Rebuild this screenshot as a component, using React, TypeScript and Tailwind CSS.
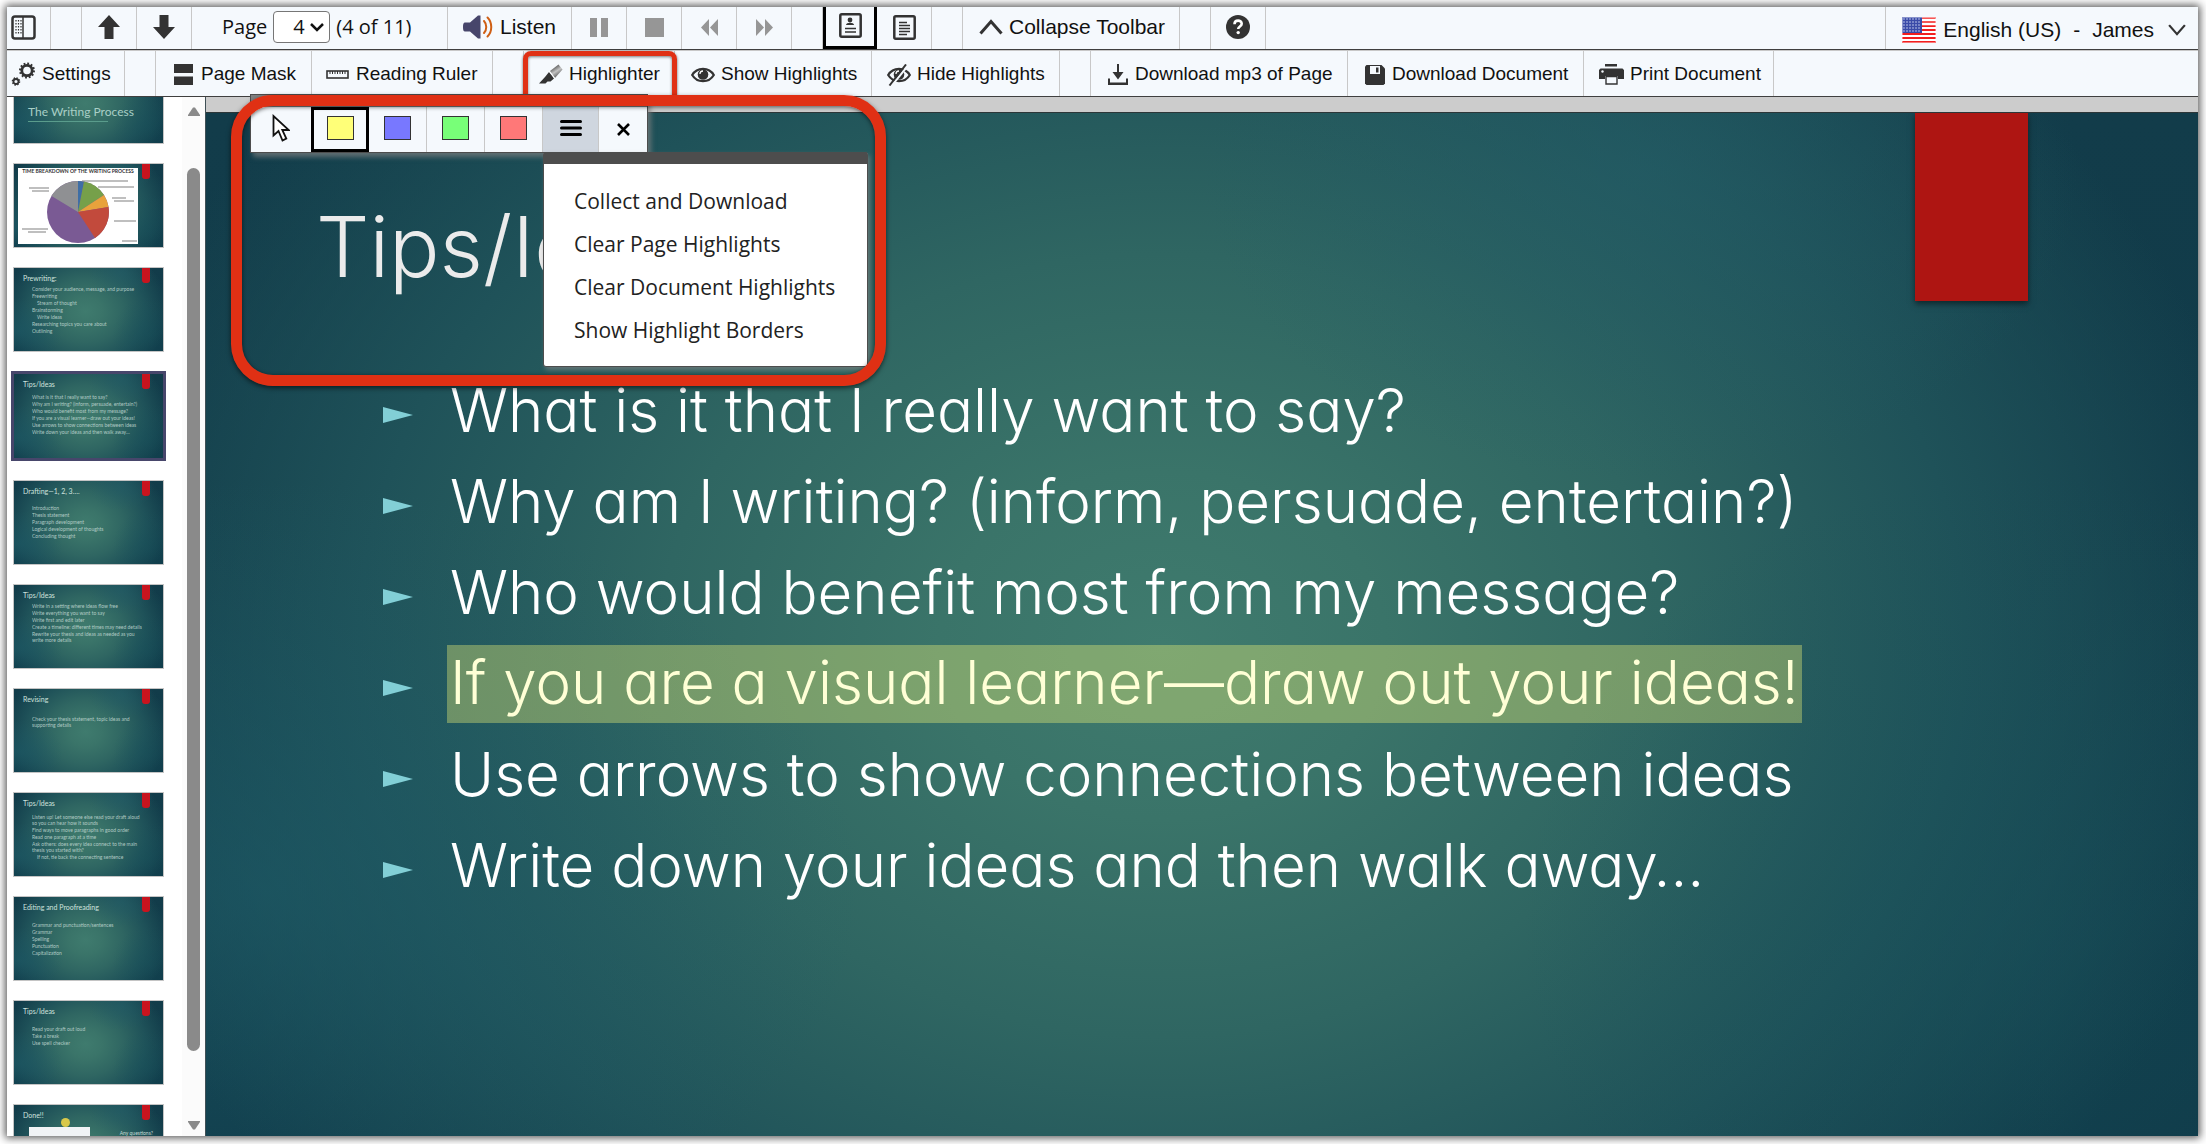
import type { ReactNode } from 'react';

const ink = '#333333';

function ArrowIcon({ down = false }: { down?: boolean }) {
  return (
    <svg width="22" height="24" viewBox="0 0 22 24" fill={ink}>
      <path d={down ? 'M6.500 0h9v12H22L11 24 0 12h6.500z' : 'M6.500 24h9V12H22L11 0 0 12h6.500z'} />
    </svg>
  );
}

function PanelIcon() {
  return (
    <svg width="25" height="25" viewBox="0 0 25 25" fill="none" stroke={ink}>
      <rect x="1.500" y="1.500" width="22" height="22" rx="2.500" strokeWidth="2.500" />
      <path d="M12 2v21" strokeWidth="1.500" />
      <path d="M5 5v14M7.500 5v14M10 5v14" strokeWidth="1.200" strokeDasharray="1.500 1.500" />
    </svg>
  );
}

function SpeakerIcon() {
  return (
    <svg width="30" height="24" viewBox="0 0 30 24" fill="none">
      <path d="M2 7.500h5L15 0.500h2.500v23H15L7 16.500H2C0.500 16.500 0 15 0 12s0.500-4.500 2-4.500z" fill="#47466b" />
      <path d="M21 6c3 3.200 3 8.800 0 12" stroke="#cf5f14" strokeWidth="2" strokeLinecap="round" />
      <path d="M24.500 2.500c5 5 5 14 0 19" stroke="#cf5f14" strokeWidth="2" strokeLinecap="round" />
    </svg>
  );
}

function PortraitPageIcon() {
  return (
    <svg width="23" height="25" viewBox="0 0 23 25" fill="none" stroke={ink}>
      <rect x="1.300" y="1.300" width="20.400" height="22.400" rx="1.500" strokeWidth="2.500" />
      <circle cx="11" cy="7" r="2.400" fill={ink} stroke="none" />
      <path d="M7 12c0-3 8-3 8 0z" fill={ink} stroke="none" />
      <path d="M6 15.500h11M6 19h11" strokeWidth="1.600" />
    </svg>
  );
}

function TextPageIcon() {
  return (
    <svg width="23" height="25" viewBox="0 0 23 25" fill="none" stroke={ink}>
      <rect x="1.300" y="1.300" width="20.400" height="22.400" rx="1.500" strokeWidth="2.500" />
      <path d="M6 7.500h8M6 10.500h11M6 13.500h11M6 16.500h11M6 19.500h8" strokeWidth="1.500" />
    </svg>
  );
}

function ChevronIcon({ up = false, size = 24, weight = 3 }: { up?: boolean; size?: number; weight?: number }) {
  return (
    <svg width={size} height={(size * 16) / 24} viewBox="0 0 24 16" fill="none" stroke={ink} strokeWidth={weight}>
      <path d={up ? 'M1.500 14.500L12 2.500l10.500 12' : 'M1.500 1.500L12 13.500l10.500-12'} />
    </svg>
  );
}

function HelpIcon() {
  return (
    <svg width="24" height="24" viewBox="0 0 24 24" fill="none">
      <circle cx="12" cy="12" r="12" fill={ink} />
      <path d="M8.500 9.200c0-4.700 7.200-4.600 7.200-0.500 0 2.700-3.500 2.800-3.500 5.300" stroke="#fff" strokeWidth="2.600" />
      <circle cx="12.200" cy="17.600" r="1.700" fill="#fff" />
    </svg>
  );
}

function FlagIcon() {
  const stripes = [0, 2, 4, 6, 8, 10, 12];
  return (
    <svg width="34" height="26" viewBox="0 0 34 26">
      <rect width="34" height="26" fill="#fff" />
      {stripes.map((i) => (
        <rect key={i} y={i * 2} width="34" height="2" fill="#f21f1f" />
      ))}
      <rect width="34" height="9" fill="#fff" opacity="0.250" />
      <rect width="20" height="16" fill="#3a4ba8" />
      {[2, 5, 8, 11, 14].map((y) =>
        [2, 5, 8, 11, 14, 17].map((x) => <circle key={`${x}-${y}`} cx={x} cy={y} r="0.800" fill="#c9cff0" />),
      )}
      <rect x="0.500" y="0.500" width="33" height="25" fill="none" stroke="#fff" opacity="0.400" />
    </svg>
  );
}

function Gear({ cx, cy, r, w, teeth }: { cx: number; cy: number; r: number; w: number; teeth: number }) {
  const step = (2 * Math.PI * (r + w / 2)) / teeth;
  return (
    <g fill="none" stroke={ink}>
      <circle cx={cx} cy={cy} r={r} strokeWidth={w} />
      <circle cx={cx} cy={cy} r={r + w / 2} strokeWidth={w} strokeDasharray={`${step / 2} ${step / 2}`} />
    </g>
  );
}

function GearsIcon() {
  return (
    <svg width="25" height="25" viewBox="0 0 25 25">
      <Gear cx={16} cy={8.500} r={5.200} w={2.800} teeth={12} />
      <Gear cx={5} cy={19.500} r={2.500} w={1.800} teeth={8} />
    </svg>
  );
}

function MaskIcon() {
  return (
    <svg width="19" height="21" viewBox="0 0 19 21" fill={ink}>
      <path d="M0 0h19v9H0zM0 12.500h19V21H0z" />
    </svg>
  );
}

function RulerIcon() {
  return (
    <svg width="23" height="9" viewBox="0 0 23 9" fill="none" stroke={ink}>
      <rect x="1" y="1" width="21" height="7" strokeWidth="1.600" />
      <path d="M4 1v3M6.500 1v3M9 1v3M11.500 1v3M14 1v3M16.500 1v3M19 1v3" strokeWidth="1" />
    </svg>
  );
}

function HighlighterIcon() {
  return (
    <svg width="24" height="21" viewBox="0 0 24 21">
      <defs>
        <linearGradient id="pen" x1="0.200" y1="0" x2="0.800" y2="1">
          <stop offset="0" stopColor="#222" />
          <stop offset="0.500" stopColor="#c4c4c4" />
          <stop offset="1" stopColor="#333" />
        </linearGradient>
      </defs>
      <path d="M11 7L19.500 0.500l4 5L16 14z" fill="url(#pen)" />
      <path d="M10 8l5 6.500-3.500 3H8.500L6.500 19.500H0L6 13z" fill={ink} />
      <path d="M10.500 7.500l5 6.500" stroke="#fff" strokeWidth="0.800" />
    </svg>
  );
}

function EyeIcon({ off = false }: { off?: boolean }) {
  return (
    <svg width="24" height="22" viewBox="0 0 24 22" fill="none" stroke={ink}>
      <path d="M1.200 11C6 2.800 18 2.800 22.800 11 18 19.200 6 19.200 1.200 11z" strokeWidth="2.200" />
      <circle cx="12" cy="10.500" r="5.300" fill={ink} stroke="none" />
      <path d="M9 10c0-2 1.300-3 3-3" stroke="#fff" strokeWidth="1.300" />
      {off && <path d="M4.500 22L21 1.500" stroke="#f5f9fd" strokeWidth="2" />}
      {off && <path d="M2.500 21.500L19 0.500" strokeWidth="2" />}
    </svg>
  );
}

function DownloadIcon() {
  return (
    <svg width="20" height="21" viewBox="0 0 20 21" fill={ink}>
      <path d="M9 0h2v8h4.500L10 15.500 4.500 8H9z" />
      <path d="M0 14.500h2v4h16v-4h2V21H0z" />
    </svg>
  );
}

function SaveIcon() {
  return (
    <svg width="20" height="20" viewBox="0 0 20 20">
      <path d="M1.500 0h15L20 3.500V18.500L18.500 20h-17L0 18.500v-17z" fill={ink} />
      <path d="M5 1h10v8H5z" fill="#f5f9fd" />
      <path d="M11 2.500h2.500v5H11z" fill={ink} />
    </svg>
  );
}

function PrintIcon() {
  return (
    <svg width="25" height="21" viewBox="0 0 25 21">
      <path d="M6 0h12v2.500H6zM1.500 4.500h22L25 6v9h-6v-3H6v3H0V6z" fill={ink} />
      <path d="M7 12.500h11V20H7z" fill="#f5f9fd" stroke={ink} strokeWidth="1.400" />
      <circle cx="3.500" cy="7.500" r="1.200" fill="#f5f9fd" />
    </svg>
  );
}

function PointerIcon() {
  return (
    <svg width="18" height="28" viewBox="0 0 18 28" fill="#fff" stroke="#111" strokeWidth="1.800">
      <path d="M1.500 2v19.500l5-4.500 4 9.500 3.800-2-4-8.500h6.500z" />
    </svg>
  );
}

const pageOptions = ['1', '2', '3', '4', '5', '6', '7', '8', '9', '10', '11'];

function ToolButton({ className, label, icon, children }: { className: string; label: string; icon: ReactNode; children?: ReactNode }) {
  return (
    <button aria-label={label} className={`flex h-full shrink-0 items-center whitespace-nowrap border-r border-[#c8c8c8] ${className}`}>
      {icon}
      {children}
    </button>
  );
}

function Spacer({ className }: { className: string }) {
  return <div className={`h-full shrink-0 border-r border-[#c8c8c8] ${className}`} />;
}

function PrimaryToolbar() {
  return (
    <div className="flex h-[43px] items-center border-b border-[#3f3f3f] text-[21px] [&>*]:pb-[2px]">
      <ToolButton className="w-[44px] pl-1" label="Toggle panel" icon={<PanelIcon />} />
      <Spacer className="w-[31px]" />
      <ToolButton className="w-[55px] justify-center" label="Previous page" icon={<ArrowIcon />} />
      <ToolButton className="w-[55px] justify-center" label="Next page" icon={<ArrowIcon down />} />
      <div className="flex h-full w-[256px] shrink-0 items-center whitespace-nowrap border-r border-[#c8c8c8] pl-[30px] font-['Open_Sans',sans-serif] text-[20px]">
        <label htmlFor="page">Page</label>
        <span className="relative ml-[6px] flex items-center">
          <select id="page" defaultValue="4" className="h-[32px] w-[57px] appearance-none rounded-[4px] border border-[#767676] bg-white pl-[19px] text-[20px] leading-none">
            {pageOptions.map((n) => (
              <option key={n}>{n}</option>
            ))}
          </select>
          <svg width="14" height="9" viewBox="0 0 14 9" className="pointer-events-none absolute right-[6px]" fill="none" stroke="#111" strokeWidth="2.500">
            <path d="M1 1l6 6 6-6" />
          </svg>
        </span>
        <span className="ml-[6px]">(4 of 11)</span>
      </div>
      <ToolButton className="w-[124px] gap-[7px] pl-[15px]" label="Listen" icon={<SpeakerIcon />}>Listen</ToolButton>
      <ToolButton
        className="w-[55px] justify-center"
        label="Pause"
        icon={<svg width="18" height="19" viewBox="0 0 18 19" fill="#969696"><path d="M0 0h7v19H0zM11 0h7v19h-7z" /></svg>}
      />
      <ToolButton
        className="w-[55px] justify-center"
        label="Stop"
        icon={<svg width="19" height="19" viewBox="0 0 19 19" fill="#969696"><path d="M0 0h19v19H0z" /></svg>}
      />
      <ToolButton
        className="w-[55px] justify-center"
        label="Rewind"
        icon={<svg width="17" height="17" viewBox="0 0 17 17" fill="#969696"><path d="M8 0v17L0 8.500zM17 0v17L9 8.500z" /></svg>}
      />
      <ToolButton
        className="w-[55px] justify-center"
        label="Forward"
        icon={<svg width="17" height="17" viewBox="0 0 17 17" fill="#969696"><path d="M0 0v17l8-8.500zM9 0v17l8-8.500z" /></svg>}
      />
      <Spacer className="w-[31px]" />
      <button aria-label="Image view" className="flex h-full w-[54px] shrink-0 items-center justify-center border-[3px] border-t-0 border-black">
        <PortraitPageIcon />
      </button>
      <ToolButton className="w-[55px] justify-center" label="Text view" icon={<TextPageIcon />} />
      <Spacer className="w-[31px]" />
      <ToolButton className="w-[217px] gap-[6px] pl-[16px]" label="Collapse Toolbar" icon={<ChevronIcon up />}>Collapse Toolbar</ToolButton>
      <Spacer className="w-[31px]" />
      <ToolButton className="w-[55px] justify-center" label="Help" icon={<HelpIcon />} />
      <button className="ml-auto flex h-full shrink-0 items-center whitespace-nowrap border-l border-[#c8c8c8] pl-4 pr-[12px] pt-[5px]">
        <FlagIcon />
        <span className="ml-[7px]">English (US)</span>
        <span className="mx-[12px]">-</span>
        <span className="mr-[14px]">James</span>
        <ChevronIcon size={18} weight={3} />
      </button>
    </div>
  );
}

function SecondaryToolbar() {
  return (
    <div className="flex h-[47px] items-center border-b border-t border-b-[#3f3f3f] border-t-[#c8c8c8] [&>button]:pt-[2px]">
      <ToolButton className="w-[118px] gap-[6px] pl-1" label="Settings" icon={<GearsIcon />}>Settings</ToolButton>
      <Spacer className="w-[31px]" />
      <ToolButton className="w-[156px] gap-[8px] pl-[18px]" label="Page Mask" icon={<MaskIcon />}>Page Mask</ToolButton>
      <ToolButton className="w-[181px] gap-[7px] pl-[14px]" label="Reading Ruler" icon={<RulerIcon />}>Reading Ruler</ToolButton>
      <Spacer className="w-[31px]" />
      <ToolButton className="relative w-[151px] gap-[6px] pl-[15px]" label="Highlighter" icon={<HighlighterIcon />}>
        Highlighter
        <span className="pointer-events-none absolute -left-px -right-[3px] bottom-[-8px] top-0 rounded-[8px] border-[5px] border-[#e03014] shadow-[0_1px_3px_rgba(0,0,0,0.6),inset_0_1px_3px_rgba(0,0,0,0.5)]" />
      </ToolButton>
      <ToolButton className="w-[197px] gap-[6px] pl-4" label="Show Highlights" icon={<EyeIcon />}>Show Highlights</ToolButton>
      <ToolButton className="w-[188px] gap-[6px] pl-[15px]" label="Hide Highlights" icon={<EyeIcon off />}>Hide Highlights</ToolButton>
      <Spacer className="w-[31px]" />
      <ToolButton className="w-[257px] gap-[7px] pl-[17px]" label="Download mp3 of Page" icon={<DownloadIcon />}>Download mp3 of Page</ToolButton>
      <ToolButton className="w-[236px] gap-[7px] pl-[17px]" label="Download Document" icon={<SaveIcon />}>Download Document</ToolButton>
      <ToolButton className="w-[190px] gap-[6px] pl-[15px]" label="Print Document" icon={<PrintIcon />}>Print Document</ToolButton>
    </div>
  );
}

const slideBackground =
  "bg-[radial-gradient(ellipse_22%_30%_at_72%_6%,rgba(36,94,104,0.55),transparent),radial-gradient(ellipse_30%_40%_at_3%_76%,rgba(30,92,104,0.6),transparent),radial-gradient(ellipse_24%_45%_at_90%_80%,rgba(24,82,92,0.45),transparent),radial-gradient(ellipse_56%_85%_at_48%_52%,#3f7b6e_0%,#3a7469_20%,#2f6662_45%,#1f5259_72%,rgba(16,58,72,0)_100%),linear-gradient(#123c4a,#0f3948)]";

type ThumbLine = { text: string; indent?: boolean };

type Thumb = { title: string; offset: string; lines: ThumbLine[]; selected?: boolean };

const bulletPoints = [
  'What is it that I really want to say?',
  'Why am I writing? (inform, persuade, entertain?)',
  'Who would benefit most from my message?',
  'If you are a visual learner—draw out your ideas!',
  'Use arrows to show connections between ideas',
  'Write down your ideas and then walk away…',
];

const thumbs: Thumb[] = [
  {
    title: 'Prewriting:',
    offset: 'mt-[2px]',
    lines: [
      { text: 'Consider your audience, message, and purpose' },
      { text: 'Freewriting' },
      { text: 'Stream of thought', indent: true },
      { text: 'Brainstorming' },
      { text: 'Write ideas', indent: true },
      { text: 'Researching topics you care about' },
      { text: 'Outlining' },
    ],
  },
  { title: 'Tips/Ideas', offset: 'mt-[4px]', selected: true, lines: bulletPoints.map((text) => ({ text })) },
  {
    title: 'Drafting—1, 2, 3….',
    offset: 'mt-[8px]',
    lines: [
      { text: 'Introduction' },
      { text: 'Thesis statement' },
      { text: 'Paragraph development' },
      { text: 'Logical development of thoughts' },
      { text: 'Concluding thought' },
    ],
  },
  {
    title: 'Tips/Ideas',
    offset: 'mt-[2px]',
    lines: [
      { text: 'Write in a setting where ideas flow free' },
      { text: 'Write everything you want to say' },
      { text: 'Write first and edit later' },
      { text: 'Create a timeline: different times may need details' },
      { text: 'Rewrite your thesis and ideas as needed as you write more details' },
    ],
  },
  {
    title: 'Revising',
    offset: 'mt-[11px]',
    lines: [{ text: 'Check your thesis statement, topic ideas and supporting details' }],
  },
  {
    title: 'Tips/Ideas',
    offset: 'mt-[5px]',
    lines: [
      { text: 'Listen up! Let someone else read your draft aloud so you can hear how it sounds' },
      { text: 'Find ways to move paragraphs in good order' },
      { text: 'Read one paragraph at a time' },
      { text: 'Ask others: does every idea connect to the main thesis you started with?' },
      { text: 'If not, tie back the connecting sentence', indent: true },
    ],
  },
  {
    title: 'Editing and Proofreading',
    offset: 'mt-[9px]',
    lines: [
      { text: 'Grammar and punctuation/sentences' },
      { text: 'Grammar' },
      { text: 'Spelling' },
      { text: 'Punctuation' },
      { text: 'Capitalization' },
    ],
  },
  {
    title: 'Tips/Ideas',
    offset: 'mt-[9px]',
    lines: [{ text: 'Read your draft out loud' }, { text: 'Take a break' }, { text: 'Use spell checker' }],
  },
];

function Ribbon() {
  return <span className="absolute right-[13px] top-0 h-[15px] w-[8px] rounded-b-[3px] bg-[#c8141e]" />;
}

function SlideThumb({ thumb }: { thumb: Thumb }) {
  return (
    <button
      className={`relative flex shrink-0 flex-col items-start overflow-hidden text-left text-[#c4dcd6] ${slideBackground} ${
        thumb.selected ? '-mx-[2px] h-[90px] border-[3px] border-[#47466b]' : 'h-[85px] border border-[#c4c4c4]'
      }`}
    >
      <Ribbon />
      <span className="block pl-[9px] pt-[4px] text-[7px] leading-[12px] text-[#cfe2de]">{thumb.title}</span>
      <span className={`block pl-[18px] pr-[20px] text-[5px] leading-[6px] opacity-85 ${thumb.offset}`}>
        {thumb.lines.map((line) => (
          <span key={line.text} className={`mb-px block ${line.indent ? 'pl-[5px]' : ''}`}>
            {line.text}
          </span>
        ))}
      </span>
    </button>
  );
}

function PieThumb() {
  return (
    <button aria-label="Time breakdown of the writing process" className={`relative block h-[85px] w-full shrink-0 border border-[#c4c4c4] ${slideBackground}`}>
      <Ribbon />
      <svg width="150" height="83" viewBox="0 0 150 83" className="block" fontFamily="Lato, sans-serif">
        <rect x="4" y="4" width="120" height="76" fill="#fff" />
        <text x="64" y="9" textAnchor="middle" fontSize="5" fontWeight="700" fill="#333">TIME BREAKDOWN OF THE WRITING PROCESS</text>
        <g transform="translate(64 48)">
          <circle r="31" fill="#7a5a94" />
          <path d="M0 0L-26.500-16A31 31 0 0 1 0-31z" fill="#8f9093" />
          <path d="M0 0V-31A31 31 0 0 1 6-30.400z" fill="#3f6ea5" />
          <path d="M0 0L6-30.400A31 31 0 0 1 26-17z" fill="#76a04a" />
          <path d="M0 0L26-17A31 31 0 0 1 30.500-5z" fill="#e8a23c" />
          <path d="M0 0L30.500-5A31 31 0 0 1 17 26z" fill="#c24a3c" />
        </g>
        <g stroke="#888" strokeWidth="1.400">
          <path d="M15 24h20M18 27h17M8 65h26M14 68h18M84 23h36M98 34h14M100 37h20M100 57h22M108 77h15M68 17h46" opacity="0.700" />
        </g>
      </svg>
    </button>
  );
}

function ThumbnailPanel() {
  return (
    <div className="flex w-[199px] shrink-0 overflow-hidden border-r border-[#3f4f55] bg-white">
      <div className="flex min-w-0 flex-1 flex-col gap-[19px] overflow-hidden pl-[6px] pr-[18px] font-['Lato',sans-serif]">
        <button className={`relative -mt-[38px] flex h-[85px] w-full shrink-0 flex-col items-start border border-[#c4c4c4] pl-[14px] pt-[43px] text-left text-[12px] leading-[18px] text-[#a9cfc6] ${slideBackground}`}>
          The Writing Process
          <span className="block h-px w-[80px] bg-[#5a9c8c]" />
        </button>
        <PieThumb />
        {thumbs.map((thumb, i) => (
          <SlideThumb key={i} thumb={thumb} />
        ))}
        <button className={`relative flex h-[85px] w-full shrink-0 flex-col items-start border border-[#c4c4c4] text-left ${slideBackground}`}>
          <Ribbon />
          <span className="block pl-[9px] pt-[4px] text-[7px] leading-[12px] text-[#cfe2de]">Done!!</span>
          <span className="absolute left-[47px] top-[13px] size-[9px] rounded-full bg-[#d8c84a]" />
          <span className="absolute left-[15px] top-[22px] h-[30px] w-[61px] bg-[#f1f3f5]" />
          <span className="absolute right-[10px] top-[24px] text-[5px] leading-[8px] text-[#c4dcd6]">Any questions?</span>
        </button>
      </div>
      <div className="flex w-[23px] shrink-0 flex-col items-center bg-[#fbfbfb] pb-[6px] pt-[10px]">
        <svg width="12" height="9" viewBox="0 0 12 9" fill="#8a8a8a"><path d="M5 0.500h2L12 8v1H0V8z" /></svg>
        <div className="mt-[52px] w-[13px] grow rounded-full bg-[#8a8a8a]" />
        <svg width="12" height="9" viewBox="0 0 12 9" fill="#8a8a8a" className="mt-[70px]"><path d="M5 8.500h2L12 1V0H0v1z" /></svg>
      </div>
    </div>
  );
}

function Slide() {
  return (
    <div className={`relative min-h-0 min-w-0 flex-1 overflow-hidden border-t border-[#2c3638] font-['Inter',sans-serif] font-light text-white ${slideBackground}`}>
      <div className="absolute right-[170px] top-0 h-[188px] w-[113px] bg-[#ae1512] shadow-[0_3px_6px_rgba(0,0,0,0.5)]" />
      <h1 className="pl-[110px] pt-[79px] text-[84px] leading-[110px] text-[#ebebeb] [font-feature-settings:'cv11']">Tips/Ideas</h1>
      <ul className="pl-[177px] pt-[63px] text-[60px] leading-[91px] [font-feature-settings:'cv11']">
        {bulletPoints.map((point, i) => (
          <li key={point} className="flex items-center whitespace-nowrap">
            <svg width="30" height="16" viewBox="0 0 30 16" fill="#82cfd6" className="mt-[9px] shrink-0">
              <path d="M0 0l30 8-30 8z" />
            </svg>
            <span className="ml-[34px] flex h-[91px] items-center">
              {i === 3 ? (
                <mark className="bg-[rgba(255,255,120,0.34)] px-[3px] pb-[3px] leading-[75px] text-[#ffffd6]">{point}</mark>
              ) : (
                <span className="px-[3px]">{point}</span>
              )}
            </span>
          </li>
        ))}
      </ul>
    </div>
  );
}

const swatches = [
  { name: 'Blue', color: 'bg-[#7878ff]' },
  { name: 'Green', color: 'bg-[#78ff78]' },
  { name: 'Red', color: 'bg-[#ff7878]' },
];

const menuItems = ['Collect and Download', 'Clear Page Highlights', 'Clear Document Highlights', 'Show Highlight Borders'];

function HighlighterPopup() {
  return (
    <div className="absolute left-[44px] top-[-3px]">
      <div className="w-[398px] border border-[#4d4d4d] bg-[#f5f9fd] shadow-[3px_4px_5px_rgba(128,128,128,0.7)]">
        <div className="h-[12px] bg-[#808080]" />
        <div className="flex h-[45px]">
          <button aria-label="Pointer" className="flex w-[60px] items-center justify-center pb-1"><PointerIcon /></button>
          <button aria-label="Yellow" className="flex w-[58px] items-center justify-center border-[3px] border-black pb-1">
            <span className="h-[24px] w-[27px] border border-[#333] bg-[#ffff78]" />
          </button>
          {swatches.map((s) => (
            <button key={s.name} aria-label={s.name} className="flex w-[58px] items-center justify-center border-r border-[#c8c8c8] pb-1">
              <span className={`h-[24px] w-[27px] border border-[#333] ${s.color}`} />
            </button>
          ))}
          <button aria-label="Menu" className="flex w-[56px] items-center justify-center border-r border-[#c8c8c8] bg-[#cfd6df] pb-1">
            <svg width="22" height="16" viewBox="0 0 22 16" stroke="#000" strokeWidth="3" strokeLinecap="round"><path d="M1.500 1.500h19M1.500 8h19M1.500 14.500h19" /></svg>
          </button>
          <button aria-label="Close" className="flex flex-1 items-center justify-center">
            <svg width="13" height="13" viewBox="0 0 13 13" stroke="#000" strokeWidth="2.600"><path d="M1 1l11 11M12 1L1 12" /></svg>
          </button>
        </div>
      </div>
      <div className="absolute left-[293px] top-[58px] w-[325px] rounded-[3px] border border-t-0 border-[#4d4d4d] bg-white pb-[14px] font-['Open_Sans',sans-serif] text-[21px] text-[#222] shadow-[2px_3px_5px_rgba(128,128,128,0.7)]">
        <div className="mb-[16px] h-[12px] bg-[#4d4d4d]" />
        {menuItems.map((item) => (
          <button key={item} className="block h-[43px] w-full whitespace-nowrap pl-[30px] text-left">{item}</button>
        ))}
      </div>
    </div>
  );
}

function Callout() {
  return (
    <div className="pointer-events-none absolute left-[25px] top-[-2px] h-[291px] w-[655px] rounded-[42px] border-[11px] border-[#e03014] shadow-[0_2px_5px_rgba(0,0,0,0.6),inset_0_1px_4px_rgba(0,0,0,0.6)]" />
  );
}

export default function App() {
  return (
    <div className="h-screen overflow-hidden bg-white p-[7px] pb-2 pr-2">
      <div className="flex h-full flex-col bg-[#f5f9fd] font-['Liberation_Sans',sans-serif] text-[19px] text-[#111] shadow-[0_0_8px_2px_rgba(0,0,0,0.65)]">
        <PrimaryToolbar />
        <SecondaryToolbar />
        <div className="flex min-h-0 flex-1">
          <ThumbnailPanel />
          <div className="relative z-10 flex min-w-0 flex-1 flex-col">
            <div className="h-[15px] shrink-0 bg-[#cccccc]" />
            <Slide />
            <HighlighterPopup />
            <Callout />
          </div>
        </div>
      </div>
    </div>
  );
}
